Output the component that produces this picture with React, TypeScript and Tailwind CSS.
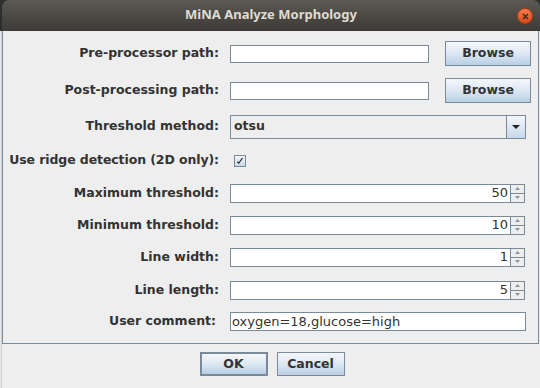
const label = "font-['DejaVu_Sans',sans-serif] font-bold text-[12.5px] text-[#333333] whitespace-nowrap";
const field = "h-[19px] bg-white border border-[#7a8a99] font-['DejaVu_Sans',sans-serif] text-[13px] text-[#333333] flex items-center";
const btn =
  "bg-gradient-to-b from-[#f4f7fb] via-[#dde8f3] to-[#b8cfe5] border border-[#7a8a99] font-['DejaVu_Sans',sans-serif] font-bold text-[12.5px] text-[#333333] flex items-center justify-center";

function Row({ name, h, children, labelW = 216 }: { name: string; h: number; children: React.ReactNode; labelW?: number }) {
  return (
    <div className="flex items-center" style={{ height: h }}>
      <div className="flex justify-end" style={{ width: labelW }}>
        <span className={label}>{name}</span>
      </div>
      <div className="flex items-center" style={{ marginLeft: 227 - labelW }}>
        {children}
      </div>
    </div>
  );
}

function Spinner({ value }: { value: string }) {
  return (
    <div className="flex">
      <div className={`${field} w-[281px] justify-end pr-[2px]`}>{value}</div>
      <div className="w-[15px] h-[19px] flex flex-col -ml-px">
        <div className="h-[10px] border border-[#7a8a99] bg-[#eeeeee] flex items-center justify-center">
          <svg width="5" height="3" viewBox="0 0 5 3"><path d="M2.5 0L5 3H0z" fill="#8a96a3" /></svg>
        </div>
        <div className="h-[10px] -mt-px border border-[#7a8a99] bg-[#eeeeee] flex items-center justify-center">
          <svg width="5" height="3" viewBox="0 0 5 3"><path d="M0 0h5L2.5 3z" fill="#8a96a3" /></svg>
        </div>
      </div>
    </div>
  );
}

export default function App() {
  return (
    <div className="w-[540px] h-[388px] bg-[#2e2e2c] flex flex-col overflow-hidden">
      <div className="h-[31px] pl-[2px] flex">
        <div className="flex-1 rounded-t-[7px] bg-gradient-to-b from-[#5b5953] to-[#3c3b37] relative flex items-center justify-center">
          <span className="font-['Noto_Sans',sans-serif] font-bold text-[13px] text-[#dfdbd2] -mt-px">MiNA Analyze Morphology</span>
          <div className="absolute right-[7px] top-[8px] w-[16px] h-[16px] rounded-full bg-gradient-to-b from-[#f47b4c] to-[#d94a1c] border border-[#b33a12] flex items-center justify-center">
            <svg width="7" height="7" viewBox="0 0 7 7">
              <path d="M1 1L6 6M6 1L1 6" stroke="#3a2a22" strokeWidth="1.4" />
            </svg>
          </div>
        </div>
      </div>
      <div className="flex-1 flex bg-[#eeeeee]">
        <div className="w-[2px] bg-gradient-to-r from-[#f2f2f2] to-[#c4c4c4]" />
        <div className="w-[537px] flex flex-col">
          <div className="h-[313px] border-l border-r border-b border-[#7a8a99] pt-[4px] flex flex-col">
            <Row name="Pre-processor path:" h={37}>
              <div className="w-[199px] h-[18px] bg-white border border-[#7a8a99]" />
              <div className={`${btn} ml-[16px] w-[86px] h-[25px]`}>Browse</div>
            </Row>
            <Row name="Post-processing path:" h={37}>
              <div className="w-[199px] h-[18px] bg-white border border-[#7a8a99]" />
              <div className={`${btn} ml-[16px] w-[86px] h-[25px]`}>Browse</div>
            </Row>
            <Row name="Threshold method:" h={35}>
              <div className="w-[296px] h-[24px] bg-[#eeeeee] border border-[#7a8a99] flex items-center">
                <span className="flex-1 pl-[3px] font-['DejaVu_Sans',sans-serif] font-bold text-[12.5px] text-[#333333]">otsu</span>
                <div className="w-[19px] h-full border-l border-[#7a8a99] bg-gradient-to-b from-[#f4f7fb] to-[#c8d8ea] flex items-center justify-center">
                  <svg width="8" height="4" viewBox="0 0 8 4"><path d="M0 0h8L4 4z" fill="#222222" /></svg>
                </div>
              </div>
            </Row>
            <div className="h-[33px] flex items-center">
              <div className="w-[216px] flex justify-end">
                <span className={`${label} tracking-[-0.1px]`}>Use ridge detection (2D only):</span>
              </div>
              <div className="ml-[15px] w-[12px] h-[12px] border border-[#7a8a99] bg-gradient-to-b from-[#f4f7fb] to-[#c6d7e9] flex items-center justify-center">
                <svg width="8" height="8" viewBox="0 0 8 8">
                  <path d="M1 5.2L2.8 7L7 1.2L6 0.8L2.8 5.2L1.8 4.2z" fill="#1e1e1e" />
                </svg>
              </div>
            </div>
            <Row name="Maximum threshold:" h={32}><Spinner value="50" /></Row>
            <Row name="Minimum threshold:" h={32}><Spinner value="10" /></Row>
            <Row name="Line width:" h={32}><Spinner value="1" /></Row>
            <Row name="Line length:" h={34}><Spinner value="5" /></Row>
            <Row name="User comment:" h={29} labelW={213}>
              <div className={`${field} w-[296px] pl-[1px] text-[13.5px]`}>oxygen=18,glucose=high</div>
            </Row>
          </div>
          <div className="flex justify-center gap-[9px] pt-[8px] pl-[3px]">
            <div className={`${btn} w-[68px] h-[24px] border-2 border-[#6f7f90]`}>OK</div>
            <div className={`${btn} w-[68px] h-[24px]`}>Cancel</div>
          </div>
        </div>
      </div>
    </div>
  );
}
